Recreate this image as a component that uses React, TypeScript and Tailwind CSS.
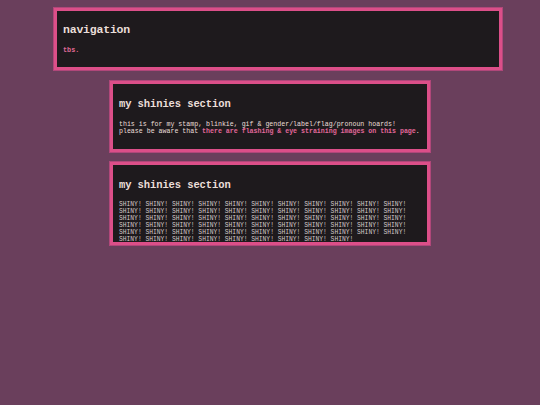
import React from 'react'

const mono = { fontFamily: '"Liberation Mono", "Courier New", monospace' }

const Box: React.FC<{ className?: string; children: React.ReactNode }> = ({ className = '', children }) => (
  <div className={`border-[3px] border-[#dc4f89] bg-[#1e1a1d] shadow-[0_0_0_1px_#b0477a] ${className}`}>
    {children}
  </div>
)

const App: React.FC = () => {
  const shinies = Array.from({ length: 64 }, () => 'SHINY!').join(' ')

  return (
    <div className="min-h-[405px] w-[540px] bg-[#6a3f5c] pt-[8px] text-[#ebdfd9]" style={mono}>
      <div className="flex flex-col items-center gap-[10px]">
        {/* navigation */}
        <Box className="ml-[16px] h-[62px] w-[448px] px-[6px] pt-[12px]">
          <h1 className="text-[11.5px] font-bold leading-[14px] tracking-[-0.2px]">navigation</h1>
          <p className="mt-[9px] text-[6.8px] font-bold leading-[8px] text-[#e06a98]">tbs.</p>
        </Box>

        {/* intro */}
        <Box className="mt-[1px] h-[71px] w-[320px] px-[6px] pt-[14px]">
          <h2 className="text-[10.5px] font-bold leading-[12px] tracking-[-0.1px]">my shinies section</h2>
          <p className="mt-[11px] text-[6.6px] leading-[7px]">
            this is for my stamp, blinkie, gif &amp; gender/label/flag/pronoun hoards!
            <br />
            please be aware that{' '}
            <span className="font-bold text-[#e2689a]">there are flashing &amp; eye straining images on this page</span>.
          </p>
        </Box>

        {/* shinies */}
        <Box className="h-[83px] w-[320px] overflow-hidden px-[6px] pt-[14px]">
          <h2 className="text-[10.5px] font-bold leading-[12px] tracking-[-0.1px]">my shinies section</h2>
          <p className="mt-[10px] text-[6.3px] leading-[7px] text-[#d3c9c9]">{shinies}</p>
        </Box>
      </div>
    </div>
  )
}

export default App
